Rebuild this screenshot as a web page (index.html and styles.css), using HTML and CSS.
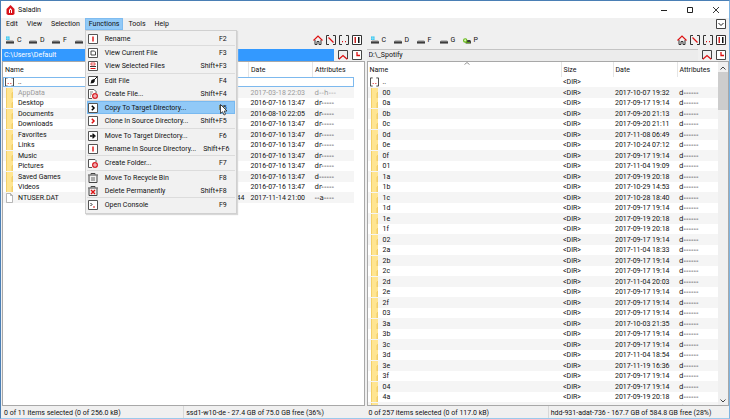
FILE: index.html
```html
<!DOCTYPE html>
<html lang="en">
<head>
<meta charset="utf-8">
<title>Saladin</title>
<link rel="stylesheet" href="styles.css">
</head>
<body>
<svg class="defs" aria-hidden="true">
  <symbol id="folder" viewBox="0 0 9 10"><path d="M1 0h7v10H1z" fill="#ffe591"/><path d="M1 0h1v10H1zM7 4h1v6H7z" fill="#f3cf68"/><path d="M6 5h1v5H6z" fill="#f8da7c"/></symbol>
  <symbol id="file" viewBox="0 0 9 10"><path d="M1.500.5h4l2 2v7h-6zM5.500.5v2h2" fill="#fff" stroke="#9a9a9a" stroke-width=".7"/></symbol>
  <symbol id="parent" viewBox="0 0 10 10"><path d="M3 .5H.5v9H3M7 .5h2.500v9H7" fill="none" stroke="#333"/><path d="M3 6h1v1.300H3zM6 6h1v1.300H6z" fill="#d11"/></symbol>
  <symbol id="root" viewBox="0 0 10 10"><path d="M3 .5H.5v9H3M7 .5h2.500v9H7" fill="none" stroke="#333"/><path d="M2.500 2.500l5 5" stroke="#d11" stroke-width="1.200"/></symbol>
  <symbol id="home" viewBox="0 0 10 10"><path d="M2 5v4.500h2V6.500h2v3h2V5" fill="none" stroke="#333"/><path d="M.5 5.500L5 1l4.500 4.500" fill="none" stroke="#d11" stroke-width="1.200"/></symbol>
  <symbol id="panes" viewBox="0 0 10 10"><path d="M.5.5h9v9h-9z" fill="#fff" stroke="#333"/><path d="M2.500 2H4v6H2.500z" fill="#c22"/><path d="M6 2h1.500v6H6z" fill="#111"/></symbol>
  <symbol id="mark" viewBox="0 0 10 10"><path d="M.5 9V.5h9V9" fill="none" stroke="#444"/><path d="M.8 9.200L5 5.500l4.200 3.700" fill="none" stroke="#d11" stroke-width="1.200"/></symbol>
  <symbol id="clock" viewBox="0 0 10 10"><path d="M.5.5h9v9h-9z" fill="#fff" stroke="#444"/><path d="M5 2v3.500h3" fill="none" stroke="#d11" stroke-width="1.300"/></symbol>
  <symbol id="down" viewBox="0 0 10 10"><path d="M.5.5h9v9h-9z" fill="#fff" stroke="#444"/><path d="M2.500 4L5 6.500 7.500 4" fill="none" stroke="#222"/></symbol>
  <symbol id="drive" viewBox="0 0 9 8"><path d="M1.500 4h6L9 5.500H0z" fill="#bbb"/><path d="M0 5.500h9V8H0z" fill="#3c3c3c"/></symbol>
  <symbol id="sysdrive" viewBox="0 0 9 8"><path d="M1.500 4h6L9 5.500H0z" fill="#bbb"/><path d="M0 5.500h9V8H0z" fill="#3c3c3c"/><path d="M0 0h4v4H0z" fill="#35c5ee"/><path d="M0 2h4M2 0v4" stroke="#c7f1fc" stroke-width=".5"/></symbol>
  <symbol id="netdrive" viewBox="0 0 9 8"><path d="M3 4h5L9 5.500V8H3z" fill="#3c3c3c"/><circle cx="2.500" cy="4.500" r="1.900" fill="#d8f3b8" stroke="#63b716" stroke-width="1.200"/><path d="M3 7h5" stroke="#63b716"/></symbol>
  <symbol id="m-rename" viewBox="0 0 10 10"><path d="M.5.5h9v9h-9z" fill="#fff" stroke="#555"/><path d="M5 2.500v5" stroke="#d11" stroke-width="1.400"/></symbol>
  <symbol id="m-view" viewBox="0 0 10 10"><path d="M.5.5h9v9h-9z" fill="#fff" stroke="#555"/><path d="M3 3h3.500l1 1v3H3z" fill="none" stroke="#333" stroke-width=".9"/></symbol>
  <symbol id="m-views" viewBox="0 0 10 10"><path d="M.5.5h9v9h-9z" fill="#fff" stroke="#555"/><path d="M3 2h4v2H3z" fill="none" stroke="#d11" stroke-width=".7"/><path d="M2 5.500h6" stroke="#333"/><path d="M2.500 7.500h5" stroke="#d11"/></symbol>
  <symbol id="m-edit" viewBox="0 0 10 10"><path d="M.5.5h9v9h-9z" fill="#fff" stroke="#555"/><path d="M2.500 7.500L3.500 4 6 3l1 2-1.500 2z" fill="#111"/><path d="M6 4l3.500-3.500" stroke="#111"/></symbol>
  <symbol id="m-create" viewBox="0 0 10 10"><path d="M4 9.500H.5v-9H6l2 2V4" fill="#fff" stroke="#555"/><path d="M2 3h3M2 5h2M2 7h1" stroke="#555" stroke-width=".7"/><circle cx="7" cy="7" r="3" fill="#d8232a"/><path d="M5 7h4M7 5v4" stroke="#fff" stroke-width=".8"/></symbol>
  <symbol id="m-copy" viewBox="0 0 10 10"><path d="M.5.5h9v9h-9z" fill="#fff" stroke="#555"/><path d="M3.800 2.800L6 5 3.800 7.200" fill="none" stroke="#000" stroke-width="1.500"/></symbol>
  <symbol id="m-clone" viewBox="0 0 10 10"><path d="M.5.5h9v9h-9z" fill="#fff" stroke="#555"/><path d="M3.800 2.800L6 5 3.800 7.200" fill="none" stroke="#d11" stroke-width="1.500"/></symbol>
  <symbol id="m-move" viewBox="0 0 10 10"><path d="M.5.5h9v9h-9z" fill="#fff" stroke="#555"/><path d="M2 5h4M4.500 2.800L7 5 4.500 7.200" fill="none" stroke="#111" stroke-width="1.300"/></symbol>
  <symbol id="m-folder" viewBox="0 0 10 10"><path d="M4 9.500H.5v-8H7l1 1V4" fill="#fff" stroke="#555"/><circle cx="7" cy="7" r="3" fill="#d8232a"/><path d="M5 7h4M7 5v4" stroke="#fff" stroke-width=".8"/></symbol>
  <symbol id="m-bin" viewBox="0 0 10 10"><path d="M3 1.500V.5h4v1M0 2h10M1 2.500v7h8v-7" fill="none" stroke="#444"/><path d="M4 4v4M6 4v4" stroke="#444" stroke-width=".8"/></symbol>
  <symbol id="m-delete" viewBox="0 0 10 10"><path d="M3 1.500V.5h4v1M0 2h10M1 2.500v7h8v-7" fill="none" stroke="#444"/><path d="M3 4l4 4M7 4L3 8" stroke="#d11" stroke-width="1.400"/></symbol>
  <symbol id="m-console" viewBox="0 0 10 10"><path d="M.5.5h9v9h-9z" fill="#fff" stroke="#555"/><path d="M2.500 3L4 4.500 2.500 6" fill="none" stroke="#222"/><path d="M5 7h2" stroke="#d11"/></symbol>
</svg>

<div class="window">
  <header class="titlebar">
    <svg class="logo" viewBox="0 0 9 10"><path d="M4.500 0L8.500 4v5L7 10H2L.5 9V4z" fill="#d8141c"/><path d="M3 8V5l1.500-2L6 5v3z" fill="#fff"/><path d="M4 5h1v3H4z" fill="#d8141c"/></svg>
    <h1>Saladin</h1>
    <div class="controls">
      <button aria-label="Minimize"><svg viewBox="0 0 8 8"><path d="M1 4.500h6" stroke="#222"/></svg></button>
      <button aria-label="Maximize"><svg viewBox="0 0 8 8"><path d="M1.500 1.500h5v5h-5z" fill="none" stroke="#222"/></svg></button>
      <button aria-label="Close"><svg viewBox="0 0 8 8"><path d="M1 1l6 6M7 1L1 7" stroke="#222" stroke-width=".9"/></svg></button>
    </div>
  </header>

  <nav class="menubar">
    <button>Edit</button>
    <button>View</button>
    <button>Selection</button>
    <div class="dropdown">
      <button class="open" aria-expanded="true">Functions</button>
      <div class="menu" role="menu">
        <div class="group">
          <button role="menuitem"><svg><use href="#m-rename"/></svg><span>Rename</span><kbd>F2</kbd></button>
        </div>
        <div class="group">
          <button role="menuitem"><svg><use href="#m-view"/></svg><span>View Current File</span><kbd>F3</kbd></button>
          <button role="menuitem"><svg><use href="#m-views"/></svg><span>View Selected Files</span><kbd>Shift+F3</kbd></button>
        </div>
        <div class="group">
          <button role="menuitem"><svg><use href="#m-edit"/></svg><span>Edit File</span><kbd>F4</kbd></button>
          <button role="menuitem"><svg><use href="#m-create"/></svg><span>Create File...</span><kbd>Shift+F4</kbd></button>
        </div>
        <div class="group">
          <button role="menuitem" class="current"><svg><use href="#m-copy"/></svg><span>Copy To Target Directory...</span><kbd>F5</kbd></button>
          <button role="menuitem"><svg><use href="#m-clone"/></svg><span>Clone In Source Directory...</span><kbd>Shift+F5</kbd></button>
        </div>
        <div class="group">
          <button role="menuitem"><svg><use href="#m-move"/></svg><span>Move To Target Directory...</span><kbd>F6</kbd></button>
          <button role="menuitem"><svg><use href="#m-rename"/></svg><span>Rename In Source Directory...</span><kbd>Shift+F6</kbd></button>
        </div>
        <div class="group">
          <button role="menuitem"><svg><use href="#m-folder"/></svg><span>Create Folder...</span><kbd>F7</kbd></button>
        </div>
        <div class="group">
          <button role="menuitem"><svg><use href="#m-bin"/></svg><span>Move To Recycle Bin</span><kbd>F8</kbd></button>
          <button role="menuitem"><svg><use href="#m-delete"/></svg><span>Delete Permanently</span><kbd>Shift+F8</kbd></button>
        </div>
        <div class="group">
          <button role="menuitem"><svg><use href="#m-console"/></svg><span>Open Console</span><kbd>F9</kbd></button>
        </div>
        <svg class="pointer" viewBox="0 0 8 12"><path d="M.5.5v9l2-1.800L4 11l1.500-.7L4.200 7H7z" fill="#fff" stroke="#222" stroke-width=".8"/></svg>
      </div>
    </div>
    <button>Tools</button>
    <button>Help</button>
    <button class="tool more" aria-label="More"><svg><use href="#down"/></svg></button>
  </nav>

  <main class="panes">
    <section class="pane active" aria-label="Left pane">
      <div class="toolbar">
        <button class="drive"><svg><use href="#sysdrive"/></svg>C</button>
        <button class="drive"><svg><use href="#drive"/></svg>D</button>
        <button class="drive"><svg><use href="#drive"/></svg>F</button>
        <button class="drive" aria-label="G"><svg><use href="#drive"/></svg></button>
        <div class="tools">
          <button class="tool" aria-label="Home"><svg><use href="#home"/></svg></button>
          <button class="tool" aria-label="Root"><svg><use href="#root"/></svg></button>
          <button class="tool" aria-label="Parent"><svg><use href="#parent"/></svg></button>
          <button class="tool" aria-label="Panes"><svg><use href="#panes"/></svg></button>
        </div>
      </div>
      <div class="pathbar">
        <input aria-label="Left path" value="C:\Users\Default">
        <div class="tools">
          <button class="tool" aria-label="Bookmarks"><svg><use href="#mark"/></svg></button>
          <button class="tool" aria-label="History"><svg><use href="#clock"/></svg></button>
        </div>
      </div>
      <div class="list">
        <table>
          <colgroup><col><col class="size"><col class="date"><col class="attr"></colgroup>
          <thead><tr><th>Name</th><th></th><th>Date</th><th>Attributes</th></tr></thead>
          <tbody id="left-rows"></tbody>
        </table>
        <div class="gutter"></div>
      </div>
      <footer class="status"><span>0 of 11 items selected (0 of 256.0 kB)</span><span>ssd1-w10-de - 27.4 GB of 75.0 GB free (36%)</span></footer>
    </section>

    <section class="pane" aria-label="Right pane">
      <div class="toolbar">
        <button class="drive"><svg><use href="#sysdrive"/></svg>C</button>
        <button class="drive"><svg><use href="#drive"/></svg>D</button>
        <button class="drive"><svg><use href="#drive"/></svg>F</button>
        <button class="drive"><svg><use href="#drive"/></svg>G</button>
        <button class="drive"><svg><use href="#netdrive"/></svg>P</button>
        <div class="tools">
          <button class="tool" aria-label="Home"><svg><use href="#home"/></svg></button>
          <button class="tool" aria-label="Root"><svg><use href="#root"/></svg></button>
          <button class="tool" aria-label="Parent"><svg><use href="#parent"/></svg></button>
          <button class="tool" aria-label="Panes"><svg><use href="#panes"/></svg></button>
        </div>
      </div>
      <div class="pathbar">
        <input aria-label="Right path" value="D:\_Spotify">
        <div class="tools">
          <button class="tool" aria-label="Bookmarks"><svg><use href="#mark"/></svg></button>
          <button class="tool" aria-label="History"><svg><use href="#clock"/></svg></button>
        </div>
      </div>
      <div class="list">
        <table>
          <colgroup><col><col class="size"><col class="date"><col class="attr"></colgroup>
          <thead><tr><th class="sorted">Name<svg viewBox="0 0 6 3"><path d="M.5 2.500L3 .5l2.500 2" fill="none" stroke="#777" stroke-width=".8"/></svg></th><th>Size</th><th>Date</th><th>Attributes</th></tr></thead>
          <tbody id="right-rows"></tbody>
        </table>
        <div class="gutter scroll">
          <svg viewBox="0 0 6 4"><path d="M.5 3.500L3 1l2.500 2.500" fill="none" stroke="#444"/></svg>
          <div class="thumb"></div>
          <svg viewBox="0 0 6 4"><path d="M.5.5L3 3 5.500.5" fill="none" stroke="#444"/></svg>
        </div>
      </div>
      <footer class="status"><span>0 of 257 items selected (0 of 117.0 kB)</span><span>hdd-931-adat-736 - 167.7 GB of 584.8 GB free (28%)</span></footer>
    </section>
  </main>
</div>
<script src="rows.js"></script>
</body>
</html>
```

FILE: styles.css
```css
* { box-sizing: border-box; }

body, h1 { margin: 0; }

body, button, input, kbd {
  font: 7px/10px Roboto, "Open Sans", sans-serif;
  color: #111;
}

button {
  padding: 0;
  border: 0;
  background: none;
  white-space: nowrap;
}

svg { display: block; }

.defs { position: absolute; width: 0; height: 0; }

.window {
  display: flex;
  flex-direction: column;
  height: 100vh;
  overflow: hidden;
  background: #f0f0f0;
  border: 1px solid #4a7fb5;
  border-right-color: #7fb4e0;
  border-bottom-color: #9cc9ec;
}

/* Title bar */
.titlebar {
  display: flex;
  align-items: center;
  height: 17px;
  padding-left: 5px;
  gap: 3px;
  background: #fff;
}

.logo { width: 9px; height: 10px; }
.titlebar h1 { font-size: 7px; font-weight: 400; }

.controls { display: flex; margin-left: auto; }
.controls button { width: 26px; padding: 0 9px; }
.controls svg { width: 8px; height: 8px; }

/* Menu bar */
.menubar {
  display: flex;
  gap: 1px;
  height: 13px;
  padding-left: 1px;
}

.menubar > button, .dropdown > button { height: 12px; padding: 0 4px; }

.dropdown { position: relative; }
.dropdown > .open { background: #91c9f7; outline: 1px solid #7fbcf0; outline-offset: -1px; }

.tool, .tool svg { width: 10px; height: 10px; }
.menubar > .more { width: 10px; height: 10px; margin: 1px 3px 0 auto; padding: 0; }

.menu {
  position: absolute;
  z-index: 1;
  top: 12px;
  left: 0;
  width: 152px;
  padding: 1px;
  background: #f1f1f1;
  border: 1px solid #d0d0d0;
  box-shadow: 1px 1px 1px #d8d8d8;
}

.group + .group { border-top: 1px solid #dcdcdc; }
.group:nth-child(even) { padding-bottom: 1px; }

.menu button {
  display: grid;
  grid-template-columns: 10px 1fr auto;
  gap: 7px;
  align-items: center;
  width: 100%;
  height: 13px;
  padding: 0 8px 0 1px;
  text-align: left;
}

.menu button svg { width: 10px; height: 10px; }
.menu .current { background: #91c9f7; outline: 1px solid #78b9f0; outline-offset: -1px; }

.pointer { position: absolute; top: 73px; left: 134px; width: 8px; height: 12px; }

/* Panes */
.panes {
  display: grid;
  grid-template-columns: 1fr 1fr;
  gap: 2px;
  flex: 1;
  min-height: 0;
  padding-left: 1px;
}

.pane {
  display: flex;
  flex-direction: column;
  min-width: 0;
  min-height: 0;
}

.toolbar {
  display: flex;
  align-items: center;
  height: 17px;
  padding: 0 3px 0 4px;
}

.drive {
  display: flex;
  align-items: center;
  gap: 3px;
  width: 23px;
}

.drive svg { width: 8px; height: 8px; }

.tools { display: flex; gap: 4px; margin-left: auto; }
.toolbar .tools { gap: 3px; }

.pathbar {
  display: flex;
  align-items: center;
  gap: 4px;
  height: 13px;
  padding-right: 3px;
}

.pathbar input {
  flex: 1;
  min-width: 0;
  height: 12px;
  padding: 0 2px;
  border: 0;
  border-top: 1px solid #c4c4c4;
  background: #ececec;
}

.active .pathbar input { background: #3399ff; border-color: #3399ff; color: #fff; }

.list {
  display: flex;
  flex: 1;
  min-height: 0;
  overflow: hidden;
  background: #fff;
  border: 1px solid #a8a8a8;
}

table {
  flex: 1;
  align-self: flex-start;
  min-width: 0;
  table-layout: fixed;
  border-collapse: collapse;
}

.size { width: 52px; }
.date { width: 64px; }
.attr { width: 41px; }

th, td {
  padding: 0 0 0 2px;
  font-weight: 400;
  text-align: left;
  white-space: nowrap;
}

th { height: 15px; border-right: 1px solid #e5e5e5; }
th:last-child { border-right: 0; }

.sorted { position: relative; }
.sorted svg { position: absolute; top: 0; left: 50%; width: 6px; height: 3px; }

tbody tr { height: 10px; }
tbody tr:nth-child(even) { height: 11px; background: #f5f5f5; }

td:last-child { font-family: "DejaVu Sans", sans-serif; }

.name { display: flex; gap: 4px; height: 10px; }
.name svg { width: 9px; height: 10px; }

.number { text-align: right; padding-right: 4px; }
.hidden-file { color: #9a9a9a; }
.focused { outline: 1px solid #7db9ee; outline-offset: -1px; }

.gutter { width: 10px; }

.scroll {
  display: flex;
  flex-direction: column;
  align-items: center;
  padding: 4px 0 2px;
  background: #f0f0f0;
}

.scroll svg { width: 6px; height: 4px; }
.thumb { width: 10px; height: 38px; margin: 2px 0 auto; background: #cdcdcd; }

.status {
  display: grid;
  grid-template-columns: 1fr 1fr;
  height: 12px;
  line-height: 14px;
  white-space: nowrap;
}

.status span { padding-left: 2px; }
.status span + span { border-left: 1px solid #d8d8d8; }
```

FILE: rows.js
```js
const left = [
  ["parent", "..", "", "", ""],
  ["folder", "AppData", "", "2017-03-18 22:03", "d--h---"],
  ["folder", "Desktop", "", "2016-07-16 13:47", "dr-----"],
  ["folder", "Documents", "", "2016-08-10 22:05", "dr-----"],
  ["folder", "Downloads", "", "2016-07-16 13:47", "dr-----"],
  ["folder", "Favorites", "", "2016-07-16 13:47", "dr-----"],
  ["folder", "Links", "", "2016-07-16 13:47", "dr-----"],
  ["folder", "Music", "", "2016-07-16 13:47", "dr-----"],
  ["folder", "Pictures", "", "2016-07-16 13:47", "dr-----"],
  ["folder", "Saved Games", "", "2016-07-16 13:47", "d------"],
  ["folder", "Videos", "", "2016-07-16 13:47", "dr-----"],
  ["file", "NTUSER.DAT", "144", "2017-11-14 21:00", "--a----"]
];

const folders = `00 10-07 19:32
0a 09-17 19:14
0b 09-20 21:13
0c 09-20 21:11
0d 11-08 06:49
0e 10-24 07:12
0f 09-17 19:14
01 11-04 19:09
1a 09-19 20:18
1b 10-29 14:53
1c 10-28 18:40
1d 09-17 19:14
1e 09-19 20:18
1f 09-19 20:18
02 09-17 19:14
2a 11-04 18:33
2b 09-17 19:14
2c 09-17 19:14
2d 11-04 20:03
2e 09-17 19:14
2f 09-17 19:14
03 09-17 19:14
3a 10-03 21:35
3b 09-17 19:14
3c 09-17 19:14
3d 11-04 18:54
3e 11-19 16:36
3f 09-17 19:14
04 09-17 19:14
4a 09-19 20:18
4b 10-11 06:40`.split("\n").map(line => {
  const [name, day, time] = line.split(" ");
  return ["folder", name, "<DIR>", `2017-${day} ${time}`, "d------"];
});

const right = [["parent", "..", "<DIR>", "", ""], ...folders];

function fill(id, rows) {
  const body = document.getElementById(id);
  for (const [icon, name, size, date, attributes] of rows) {
    const row = body.insertRow();
    row.insertCell().innerHTML =
      `<div class="name"><svg><use href="#${icon}"/></svg><span>${name}</span></div>`;
    for (const value of [size, date, attributes]) row.insertCell().textContent = value;
    if (icon === "file") row.cells[1].className = "number";
    if (attributes.includes("h")) row.className = "hidden-file";
  }
}

fill("left-rows", left);
fill("right-rows", right);
document.querySelector("#left-rows tr").classList.add("focused");
```
